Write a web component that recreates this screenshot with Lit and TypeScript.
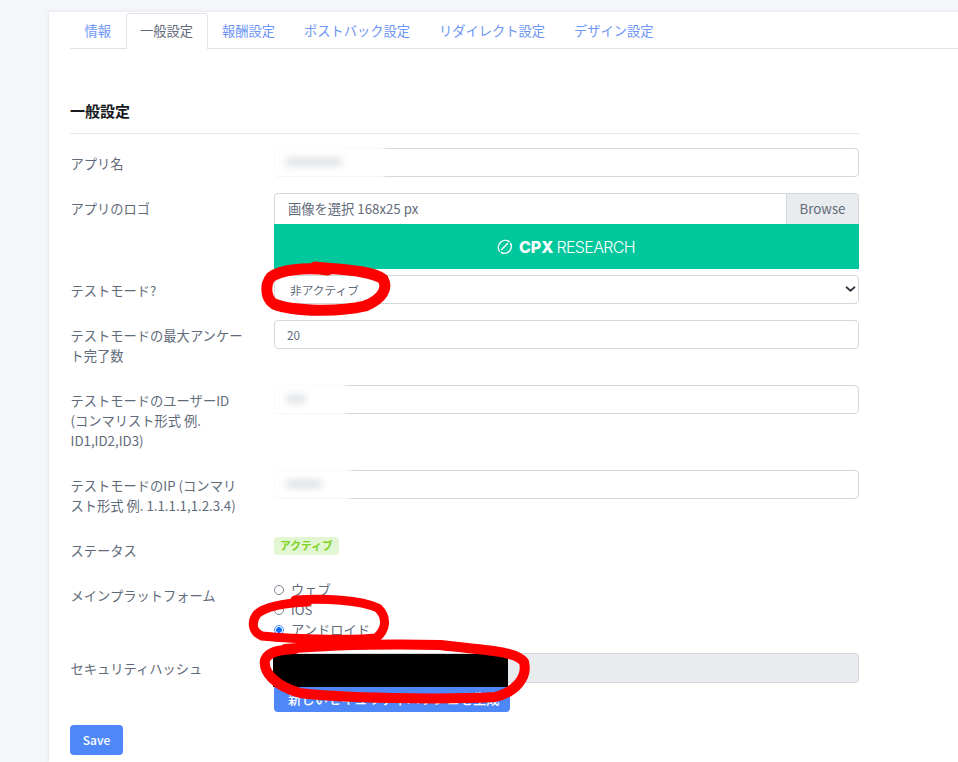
import { LitElement, html, css } from "lit";
import { customElement } from "lit/decorators.js";

@customElement("app-root")
export class AppRoot extends LitElement {
  static styles = css`
    :host {
      display: block;
      position: relative;
      width: 958px;
      height: 762px;
      overflow: hidden;
      background: #f5f6fa;
      font-family: "Noto Sans CJK JP", "Noto Sans", sans-serif;
      font-size: 13.28px;
      line-height: 20px;
      color: #5f6b7a;
    }
    .card {
      margin: 12px 0 0 49px;
      height: 750px;
      background: #fff;
      box-shadow: 0 0 4px rgba(60, 70, 100, 0.12);
      padding: 1px 0 0 21px;
      box-sizing: border-box;
    }
    .tabs {
      display: flex;
      height: 36px;
      box-sizing: border-box;
      border-bottom: 1px solid #dfe3e9;
    }
    .tab {
      padding: 7px 13.5px 0;
      height: 35px;
      box-sizing: border-box;
      border: 1px solid transparent;
      border-bottom: 0;
      color: #6c95f5;
      font-size: 13.25px;
      white-space: nowrap;
    }
    .tab.active {
      color: #5f6b7a;
      background: #fff;
      border-color: #dfe3e9;
      border-radius: 4px 4px 0 0;
      height: 36px;
    }
    .form {
      width: 789px;
    }
    h2 {
      margin: 51px 0 0;
      font-size: 15px;
      line-height: 22px;
      font-weight: 700;
      color: #16191d;
      padding-bottom: 11px;
      border-bottom: 1px solid #e3e6ea;
    }
    .rows {
      margin-top: 14px;
    }
    .row {
      display: grid;
      grid-template-columns: 204px 585px;
      margin-bottom: 16px;
    }
    .row.tight {
      margin-bottom: 6px;
    }
    .row.radios,
    .row.hashrow {
      margin-bottom: 13px;
    }
    .lbl {
      padding: 5.5px 0 3.5px 0.5px;
      width: 178px;
    }
    .ctl {
      position: relative;
      min-width: 0;
    }
    .field {
      display: block;
      box-sizing: border-box;
      width: 585px;
      height: 29px;
      border: 1px solid #d4d8dd;
      border-radius: 4px;
      background: #fff;
      padding: 0 12px;
      font: inherit;
      font-size: 11.7px;
      color: #5f6b7a;
      outline: none;
    }
    .field.hash {
      height: 30px;
      background: #e9ecef;
    }
    .selectwrap {
      position: relative;
    }
    select.field {
      appearance: none;
      padding: 1px 15px 0;
    }
    .chev {
      position: absolute;
      right: 3px;
      top: 10px;
      width: 11px;
      height: 8px;
      pointer-events: none;
    }
    .file {
      display: flex;
      height: 31px;
      box-sizing: border-box;
      border: 1px solid #d4d8dd;
      border-bottom: 0;
      border-radius: 4px 4px 0 0;
      overflow: hidden;
    }
    .file .name {
      flex: 1;
      padding: 5px 13px;
    }
    .file .browse {
      width: 72px;
      box-sizing: border-box;
      text-align: center;
      padding-top: 5px;
      background: #e9ecef;
      border-left: 1px solid #d4d8dd;
    }
    .logo {
      height: 45px;
      background: #03c79c;
      color: #fff;
      display: flex;
      align-items: center;
      justify-content: center;
      gap: 6px;
      padding-right: 2px;
      font-family: "Inter", "Noto Sans", sans-serif;
      font-size: 16px;
    }
    .logo svg {
      width: 17px;
      height: 17px;
    }
    .logo b {
      font-weight: 800;
    }
    .logo span {
      font-weight: 300;
      letter-spacing: -0.65px;
      margin-left: -1.5px;
    }
    .badge {
      display: inline-block;
      margin-top: 2px;
      height: 18px;
      line-height: 17px;
      padding: 0 6px;
      border-radius: 4px;
      background: #e2f6d3;
      color: #7ed321;
      font-size: 10.8px;
      font-weight: 700;
      vertical-align: top;
    }
    .radio {
      display: flex;
      align-items: center;
      height: 20px;
      gap: 7px;
    }
    .dot {
      width: 10px;
      height: 10px;
      box-sizing: border-box;
      border: 1px solid #7d8792;
      border-radius: 50%;
      background: #fff;
    }
    .dot.on {
      border-color: #3f8cff;
      background: radial-gradient(circle, #0d6efd 0 2.6px, #fff 3.2px);
    }
    .gen {
      display: block;
      width: 236px;
      height: 27px;
      margin-top: 2px;
      box-sizing: border-box;
      border: 0;
      border-radius: 4px;
      background: #4e88f8;
      color: #fff;
      font: inherit;
      font-weight: 500;
      text-align: left;
      padding: 0 14px;
      white-space: nowrap;
      overflow: hidden;
    }
    .save {
      display: block;
      width: 53px;
      height: 30px;
      border: 0;
      border-radius: 4px;
      background: #4e88f8;
      color: #fff;
      font: inherit;
      font-size: 12px;
      font-weight: 500;
      padding: 0;
    }
    .smudge {
      position: absolute;
      background: #fff;
      filter: blur(2px);
    }
    .smudge i {
      position: absolute;
      background: #dcdfe3;
      filter: blur(3px);
      border-radius: 3px;
    }
    .mask {
      position: absolute;
      left: 273px;
      top: 654px;
      width: 235px;
      height: 33px;
      background: #000;
    }
    .ink {
      position: absolute;
      left: 0;
      top: 0;
      width: 958px;
      height: 762px;
      pointer-events: none;
    }
  `;

  private smudge(l: number, t: number, w: number, h: number, bw: number) {
    return html`<div
      class="smudge"
      style="left:${l}px;top:${t}px;width:${w}px;height:${h}px"
    >
      <i style="left:14px;top:${h / 2 - 4}px;width:${bw}px;height:8px"></i>
    </div>`;
  }

  render() {
    const tabs = ["情報", "一般設定", "報酬設定", "ポストバック設定", "リダイレクト設定", "デザイン設定"];
    return html`
      <div class="card">
        <nav class="tabs">
          ${tabs.map((t, i) => html`<div class="tab ${i === 1 ? "active" : ""}">${t}</div>`)}
        </nav>
        <div class="form">
          <h2>一般設定</h2>
          <div class="rows">
            <div class="row">
              <div class="lbl">アプリ名</div>
              <div class="ctl">
                <input class="field" />
                ${this.smudge(-2, -2, 112, 32, 56)}
              </div>
            </div>
            <div class="row tight">
              <div class="lbl">アプリのロゴ</div>
              <div class="ctl">
                <div class="file">
                  <div class="name">画像を選択 168x25 px</div>
                  <div class="browse">Browse</div>
                </div>
                <div class="logo">
                  <svg viewBox="0 0 17 17" fill="none" stroke="#fff" stroke-width="1.4" stroke-linecap="round">
                    <path d="M3.6 13.2A6.9 6.9 0 0 1 13.2 3.6M14.6 5.4A6.9 6.9 0 0 1 5.4 14.6" />
                    <path d="M5.6 11.6L11.6 5.6" />
                  </svg>
                  <div><b>CPX</b> <span>RESEARCH</span></div>
                </div>
              </div>
            </div>
            <div class="row">
              <div class="lbl">テストモード?</div>
              <div class="ctl selectwrap">
                <select class="field"><option>非アクティブ</option></select>
                <svg class="chev" viewBox="0 0 12 9" fill="none" stroke="#343a40" stroke-width="2" stroke-linecap="round" stroke-linejoin="round">
                  <path d="M1.5 2.5L6 6.5L10.5 2.5" />
                </svg>
              </div>
            </div>
            <div class="row">
              <div class="lbl">テストモードの最大アンケート完了数</div>
              <div class="ctl"><input class="field" value="20" /></div>
            </div>
            <div class="row">
              <div class="lbl">テストモードのユーザーID<br />(コンマリスト形式 例.<br />ID1,ID2,ID3)</div>
              <div class="ctl">
                <input class="field" />
                ${this.smudge(-2, -2, 74, 32, 20)}
              </div>
            </div>
            <div class="row">
              <div class="lbl">テストモードのIP (コンマリスト形式 例. 1.1.1.1,1.2.3.4)</div>
              <div class="ctl">
                <input class="field" />
                ${this.smudge(-2, -2, 78, 32, 36)}
              </div>
            </div>
            <div class="row">
              <div class="lbl">ステータス</div>
              <div class="ctl"><span class="badge">アクティブ</span></div>
            </div>
            <div class="row radios">
              <div class="lbl">メインプラットフォーム</div>
              <div class="ctl">
                <label class="radio"><span class="dot"></span>ウェブ</label>
                <label class="radio"><span class="dot"></span>iOS</label>
                <label class="radio"><span class="dot on"></span>アンドロイド</label>
              </div>
            </div>
            <div class="row hashrow">
              <div class="lbl">セキュリティハッシュ</div>
              <div class="ctl">
                <input class="field hash" disabled />
                <button class="gen">新しいセキュリティハッシュを生成</button>
              </div>
            </div>
          </div>
          <button class="save">Save</button>
        </div>
      </div>
      <div class="mask"></div>
      <svg class="ink" viewBox="0 0 958 762" fill="none" stroke="#fe0000" stroke-width="10" stroke-linecap="round" stroke-linejoin="round">
        <path stroke-width="11" d="M328 270C305 267 280 270 271 277C265 284 265 298 274 304C295 312 340 312 365 306C383 299 388 288 383 279C370 270 340 270 315 267" />
        <path stroke-width="9" d="M308 602C285 603 266 606 257 614C251 622 252 632 262 636C300 640 360 640 376 638C386 630 388 618 378 608C360 600 325 598 295 600" />
        <path d="M285 649C330 645 390 644 440 645C480 650 515 650 524 662C528 678 515 692 495 697C440 700 340 698 300 693C275 686 263 672 265 660C268 652 278 650 295 649" />
      </svg>
    `;
  }
}
